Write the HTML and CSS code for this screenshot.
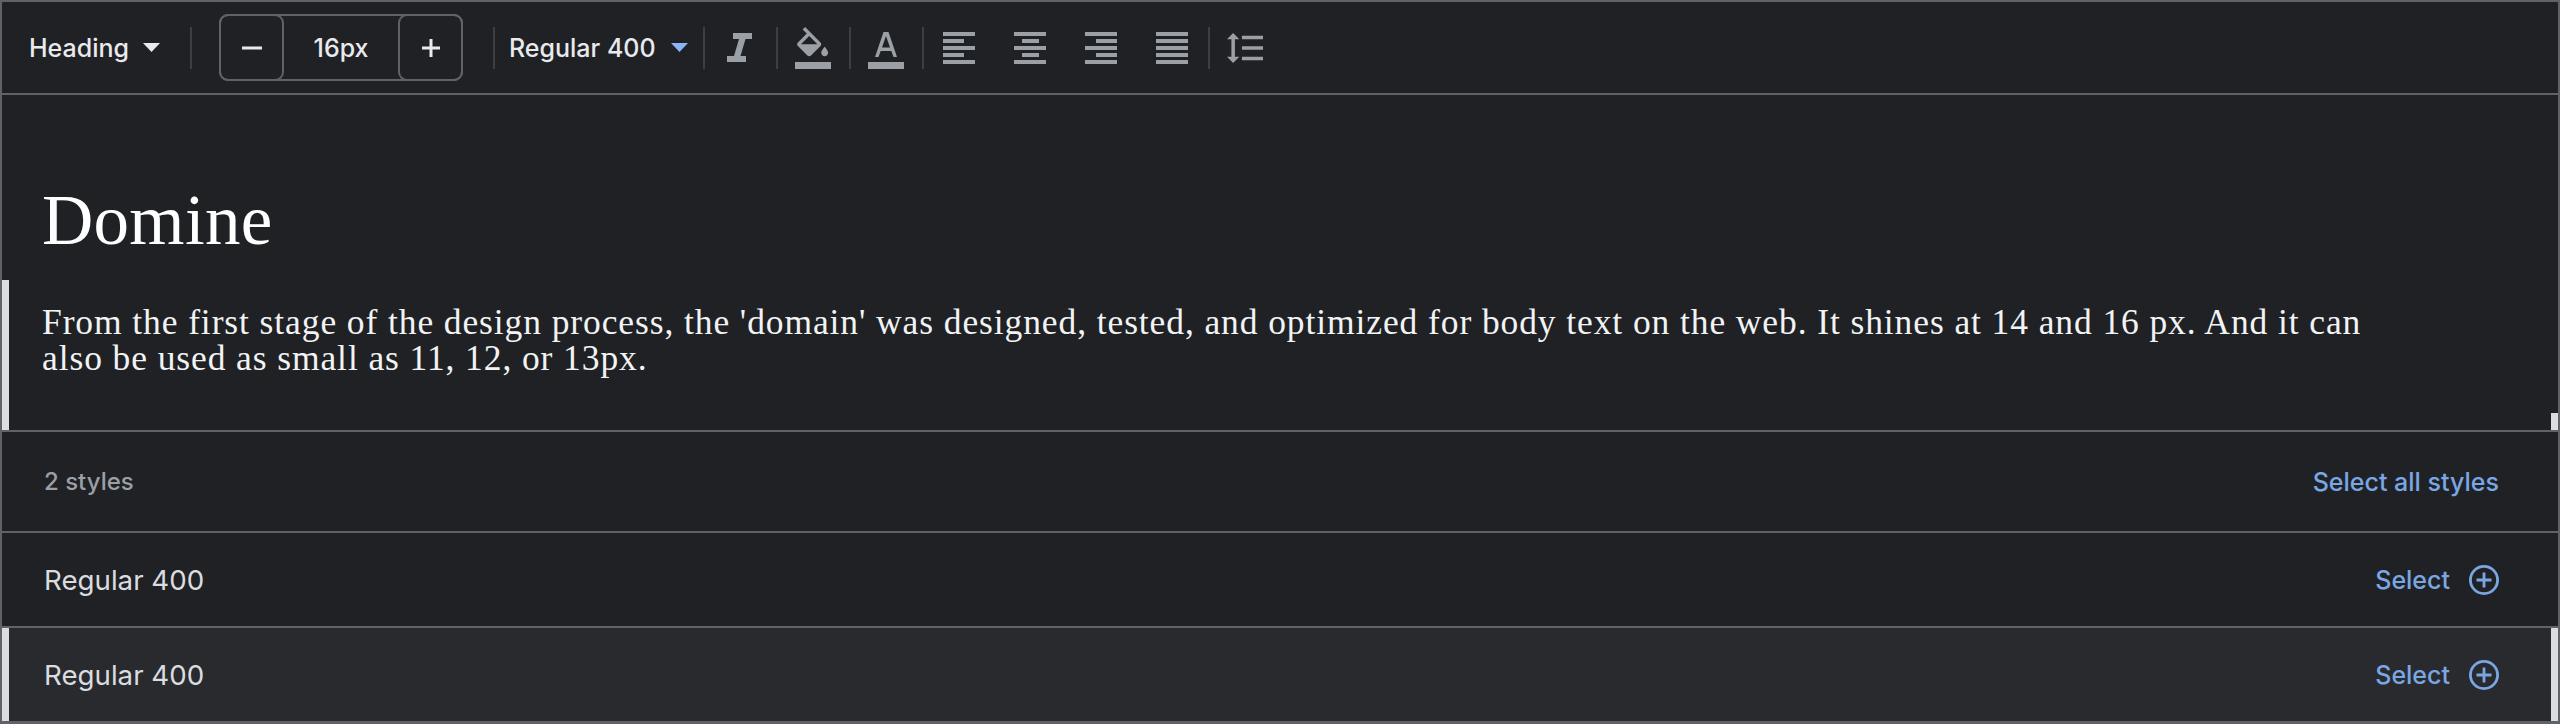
FILE: index.html
```html
<!DOCTYPE html>
<html lang="en">
<head>
<meta charset="utf-8">
<title>Domine</title>
<link rel="stylesheet" href="styles.css">
</head>
<body>
<main class="panel">
  <div class="toolbar">
    <div class="select select-type"><span>Heading</span><svg class="caret" viewBox="0 0 17 9"><path d="M0 0h17l-8.500 9z"/></svg></div>
    <i class="sep sep-wide"></i>
    <div class="stepper">
      <button class="step"><svg class="step-icon" viewBox="0 0 20 20"><path d="M0 8.500h20v3H0z"/></svg></button>
      <span class="step-value">16px</span>
      <button class="step"><svg class="step-icon" viewBox="0 0 20 20"><path d="M8.500 1h3v7.500H19v3h-7.500V19h-3v-7.500H1v-3h7.500z"/></svg></button>
    </div>
    <i class="sep sep-wide sep-weight"></i>
    <div class="select select-weight"><span>Regular 400</span><svg class="caret" viewBox="0 0 17 9"><path d="M0 0h17l-8.500 9z"/></svg></div>
    <i class="sep"></i>
    <svg class="icon" viewBox="0 0 36 36"><path d="M11 3h19v6h-6.500l-5 17H24v6H5v-6h7l5-17h-6z"/></svg>
    <i class="sep"></i>
    <svg class="icon icon-tall" viewBox="0 0 36 44"><path transform="translate(-3 1) scale(1.72)" d="M16.560 8.940L7.620 0 6.210 1.410l2.380 2.380-5.150 5.150c-.59.59-.59 1.540 0 2.120l5.500 5.500c.29.29.68.44 1.060.44s.77-.15 1.060-.44l5.500-5.500c.59-.58.59-1.530 0-2.120zM5.210 10L10 5.210 14.790 10H5.210zM19 11.500s-2 2.170-2 3.500c0 1.100.9 2 2 2s2-.9 2-2c0-1.330-2-3.500-2-3.500z"/><path d="M0 36h36v7H0z"/></svg>
    <i class="sep"></i>
    <svg class="icon icon-tall" viewBox="0 0 36 44"><path fill-rule="evenodd" d="M15.500 6h5L29 31h-3.500l-2.200-6H12.700l-2.200 6H7zM14 21.500h8L18 10z"/><path d="M0 36h36v7H0z"/></svg>
    <i class="sep"></i>
    <div class="aligns">
      <svg class="icon" viewBox="0 0 36 36"><path d="M2 2h32v4H2zM2 9h21v4H2zM2 16h32v4H2zM2 23h21v4H2zM2 30h32v4H2z"/></svg>
      <svg class="icon" viewBox="0 0 36 36"><path d="M2 2h32v4H2zM10 9h17v4H10zM2 16h32v4H2zM10 23h17v4H10zM2 30h32v4H2z"/></svg>
      <svg class="icon" viewBox="0 0 36 36"><path d="M2 2h32v4H2zM13 9h21v4H13zM2 16h32v4H2zM13 23h21v4H13zM2 30h32v4H2z"/></svg>
      <svg class="icon" viewBox="0 0 36 36"><path d="M2 2h32v4H2zM2 9h32v4H2zM2 16h32v4H2zM2 23h32v4H2zM2 30h32v4H2z"/></svg>
    </div>
    <i class="sep"></i>
    <svg class="icon" viewBox="1.500 1.750 20.500 20.500"><path d="M6 7h2.500L5 3.500 1.500 7H4v10H1.500L5 20.500 8.500 17H6V7zm4-2v2h12V5H10zm0 14h12v-2H10v2zm0-6h12v-2H10v2z"/></svg>
  </div>

  <section class="preview">
    <h1 class="preview-title">Domine</h1>
    <p class="preview-body">From the first stage of the design process, the 'domain' was designed, tested, and optimized for body text on the web. It shines at 14 and 16 px. And it can also be used as small as 11, 12, or 13px.</p>
  </section>

  <div class="row row-head">
    <span class="count">2 styles</span>
    <a class="link">Select all styles</a>
  </div>
  <div class="row">
    <span class="style-name">Regular 400</span>
    <a class="link link-select">Select<svg class="plus" viewBox="0 0 30 30"><circle cx="15" cy="15" r="13.600"/><path d="M15 7.500v15M7.500 15h15"/></svg></a>
  </div>
  <div class="row row-hover">
    <span class="style-name">Regular 400</span>
    <a class="link link-select">Select<svg class="plus" viewBox="0 0 30 30"><circle cx="15" cy="15" r="13.600"/><path d="M15 7.500v15M7.500 15h15"/></svg></a>
  </div>
</main>
</body>
</html>
```
FILE: styles.css
```css
* { box-sizing: border-box; }
html, body { margin: 0; padding: 0; background: #202124; }
.panel {
  width: 2560px;
  height: 724px;
  border: 2px solid #5f6368;
  border-bottom-width: 3px;
  background: #202124;
  display: flex;
  flex-direction: column;
  font-family: Inter, Roboto, sans-serif;
  color: #e8eaed;
  overflow: hidden;
}
.toolbar {
  height: 93px;
  flex: none;
  display: flex;
  align-items: center;
  padding-left: 27px;
  border-bottom: 2px solid #5f6368;
}
.select {
  display: flex;
  align-items: center;
  justify-content: space-between;
  flex: none;
  font-size: 25px;
  font-weight: 500;
  color: #e8eaed;
}
.select-type { width: 131px; }
.select-weight { width: 179px; }
.caret { width: 17px; height: 9px; fill: #e8eaed; }
.select-weight .caret { fill: #8ab4f8; }
.sep {
  width: 2px;
  height: 42px;
  flex: none;
  background: #3c4043;
  margin: 0 17px 0 18px;
}
.sep-wide { margin: 0 27px 0 30px; }
.sep-weight { margin: 0 14px 0 30px; }
.select-weight + .sep { margin-left: 15px; }
.stepper {
  width: 244px;
  height: 67px;
  flex: none;
  display: flex;
  align-items: stretch;
  border: 2px solid #5f6368;
  border-radius: 9px;
}
.step {
  width: 65px;
  flex: none;
  margin: -2px;
  padding: 0;
  background: none;
  border: 2px solid #5f6368;
  border-radius: 9px;
  display: flex;
  align-items: center;
  justify-content: center;
}
.step-icon { width: 20px; height: 20px; fill: #e8eaed; }
.step-value {
  flex: 1;
  display: flex;
  align-items: center;
  justify-content: center;
  font-size: 25px;
  font-weight: 500;
}
.icon { width: 36px; height: 36px; flex: none; fill: #9aa0a6; display: block; }
.icon-tall { height: 44px; }
.aligns { display: flex; gap: 35px; }
.preview {
  position: relative;
  height: 335px;
  flex: none;
  padding: 85px 40px 0;
  background: #202124;
}
.preview::before, .preview::after,
.row-hover::before, .row-hover::after {
  content: "";
  position: absolute;
  bottom: 0;
  width: 7px;
  background: #dadce0;
}
.preview::before { left: 0; height: 150px; }
.preview::after { right: 0; height: 17px; }
.preview-title {
  margin: 0;
  font-family: "Liberation Serif", serif;
  font-weight: 400;
  font-size: 71px;
  letter-spacing: 0.300px;
  line-height: 80px;
  color: #fff;
}
.preview-body {
  margin: 44px 0 0;
  width: 2340px;
  font-family: "Liberation Serif", serif;
  font-size: 35.500px;
  letter-spacing: 0.900px;
  line-height: 36px;
  color: #f1f3f4;
}
.row {
  position: relative;
  flex: none;
  height: 95px;
  display: flex;
  align-items: center;
  justify-content: space-between;
  padding: 0 59px 0 42px;
  border-top: 2px solid #5f6368;
}
.row-head { height: 101px; }
.row-hover { flex: 1; height: auto; background: #292a2d; }
.row-hover::before { left: 0; top: 0; }
.row-hover::after { right: 0; top: 0; }
.count { font-size: 24px; color: #9aa0a6; font-weight: 500; }
.style-name { font-size: 27.700px; color: #dadce0; }
.link {
  display: flex;
  align-items: center;
  font-size: 25px;
  font-weight: 500;
  color: #7aa7e4;
}
.link-select { gap: 19px; }
.plus { width: 30px; height: 30px; fill: none; stroke: #7aa7e4; stroke-width: 2.800; }
```
